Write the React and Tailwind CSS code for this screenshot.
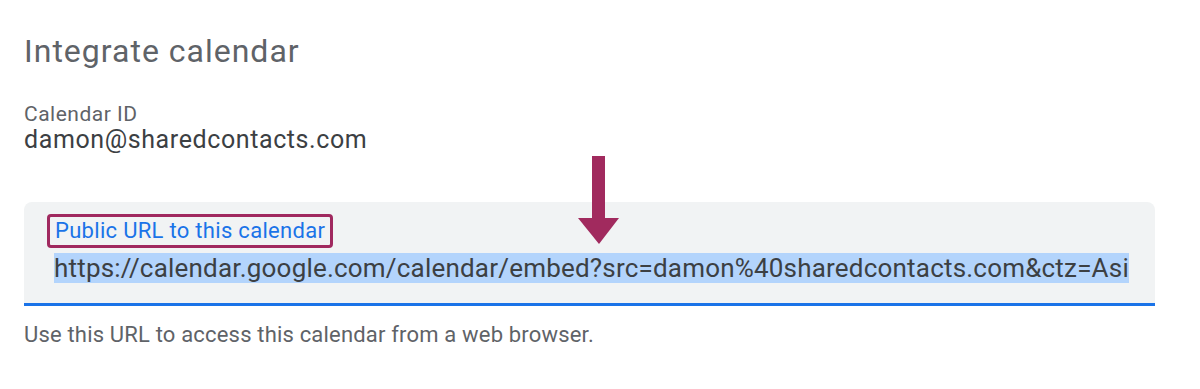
export default function App() {
  const url =
    "https://calendar.google.com/calendar/embed?src=damon%40sharedcontacts.com&ctz=Asi";

  return (
    <div
      className="relative w-[1200px] h-[389px] bg-white overflow-hidden pl-6"
      style={{ fontFamily: "Roboto, 'Liberation Sans', sans-serif" }}
    >
      {/* Title */}
      <h1 className="pt-[32px] text-[32px] leading-[38px] tracking-[1px] font-normal text-[#5f6368]">
        Integrate calendar
      </h1>

      {/* Calendar ID */}
      <div className="mt-8">
        <div className="text-[21px] leading-[24px] tracking-[0.5px] text-[#5f6368]">
          Calendar ID
        </div>
        <div className="text-[25px] leading-[28px] tracking-[0.6px] text-[#3c4043]">
          damon@sharedcontacts.com
        </div>
      </div>

      {/* Public URL field */}
      <div className="mt-12 w-[1131px] bg-[#f1f3f4] rounded-t-lg border-b-[3px] border-[#1a73e8] pt-3 pb-[19px]">
        <div className="ml-[23px] inline-block border-[3px] border-[#a0295f] rounded px-[5px] text-[22px] leading-[28px] tracking-[0.3px] text-[#1a73e8]">
          Public URL to this calendar
        </div>
        <div className="mt-[5px] ml-[30px] text-[26px] leading-[31px] tracking-[0.2px] text-[#3c4043] whitespace-nowrap">
          <span className="bg-[#b3d4fc]">{url}</span>
        </div>
      </div>

      {/* Helper text */}
      <p className="mt-[17px] text-[22px] leading-[24px] tracking-[0.18px] text-[#5f6368]">
        Use this URL to access this calendar from a web browser.
      </p>

      {/* Annotation arrow */}
      <svg
        className="absolute left-[578px] top-[156px]"
        width="42"
        height="89"
        viewBox="0 0 42 89"
      >
        <rect x="14" y="0" width="13" height="63" fill="#a12a5e" />
        <polygon points="0,62 41,62 21,88" fill="#a12a5e" />
      </svg>
    </div>
  );
}
